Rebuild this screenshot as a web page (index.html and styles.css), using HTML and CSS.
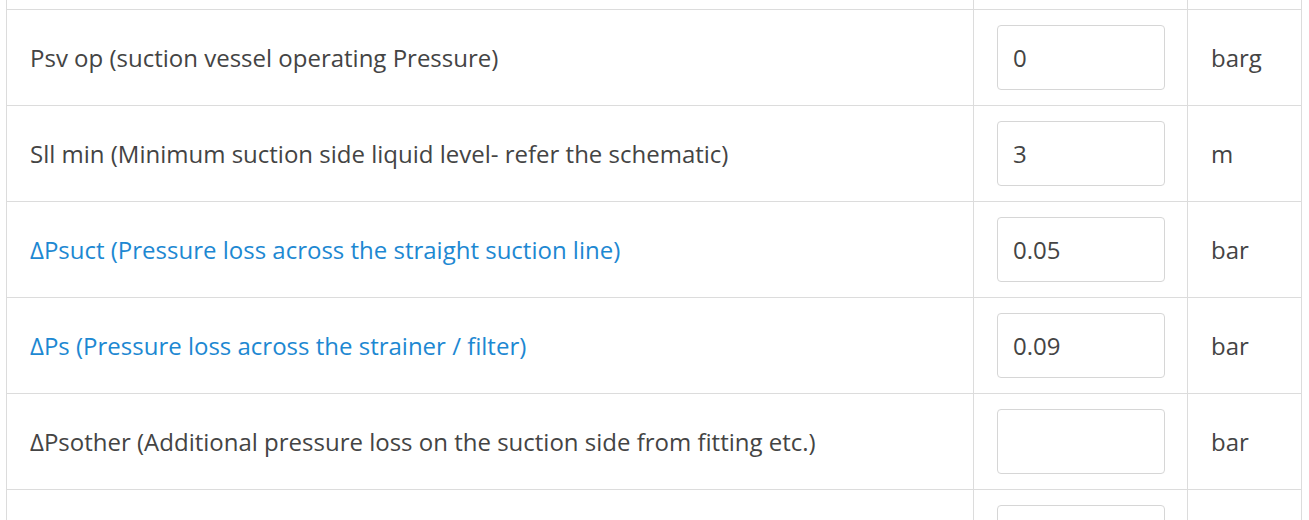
FILE: index.html
```html
<!DOCTYPE html>
<html>
<head>
<meta charset="utf-8">
<link rel="stylesheet" href="styles.css">
</head>
<body>
<div class="viewport">
<table class="calc">
  <colgroup><col class="c-label"><col class="c-input"><col class="c-unit"></colgroup>
  <tr><td class="label"></td><td><input class="field" type="text" value=""></td><td class="unit"></td></tr>
  <tr><td class="label">Psv op (suction vessel operating Pressure)</td><td><input class="field" type="text" value="0"></td><td class="unit">barg</td></tr>
  <tr><td class="label">Sll min (Minimum suction side liquid level- refer the schematic)</td><td><input class="field" type="text" value="3"></td><td class="unit">m</td></tr>
  <tr><td class="label link">ΔPsuct (Pressure loss across the straight suction line)</td><td><input class="field" type="text" value="0.05"></td><td class="unit">bar</td></tr>
  <tr><td class="label link">ΔPs (Pressure loss across the strainer / filter)</td><td><input class="field" type="text" value="0.09"></td><td class="unit">bar</td></tr>
  <tr><td class="label">ΔPsother (Additional pressure loss on the suction side from fitting etc.)</td><td><input class="field" type="text" value=""></td><td class="unit">bar</td></tr>
  <tr><td class="label"></td><td><input class="field" type="text" value=""></td><td class="unit"></td></tr>
</table>
</div>
</body>
</html>
```
FILE: styles.css
```css
html, body {
  margin: 0;
  padding: 0;
  background: #fff;
}
.viewport {
  height: 520px;
  overflow: hidden;
  padding-left: 6px;
}
.calc {
  border-collapse: collapse;
  table-layout: fixed;
  width: 1295px;
  margin-top: -87px;
  font-family: "Open Sans", "Liberation Sans", sans-serif;
  font-size: 24px;
  color: #444;
}
.c-label { width: 967px; }
.c-input { width: 214px; }
.c-unit { width: 114px; }
.calc td {
  border: 1px solid #dcdcdc;
  padding: 15px 23px;
  height: 65px;
  vertical-align: middle;
  box-sizing: content-box;
}
.label.link {
  color: #1d88d2;
}
.field {
  display: block;
  box-sizing: border-box;
  width: 168px;
  height: 65px;
  border: 1px solid #d6d6d6;
  border-radius: 4px;
  padding: 0 15px;
  font-family: "Open Sans", "Liberation Sans", sans-serif;
  font-size: 24px;
  color: #444;
  background: #fff;
  outline: none;
}
```
